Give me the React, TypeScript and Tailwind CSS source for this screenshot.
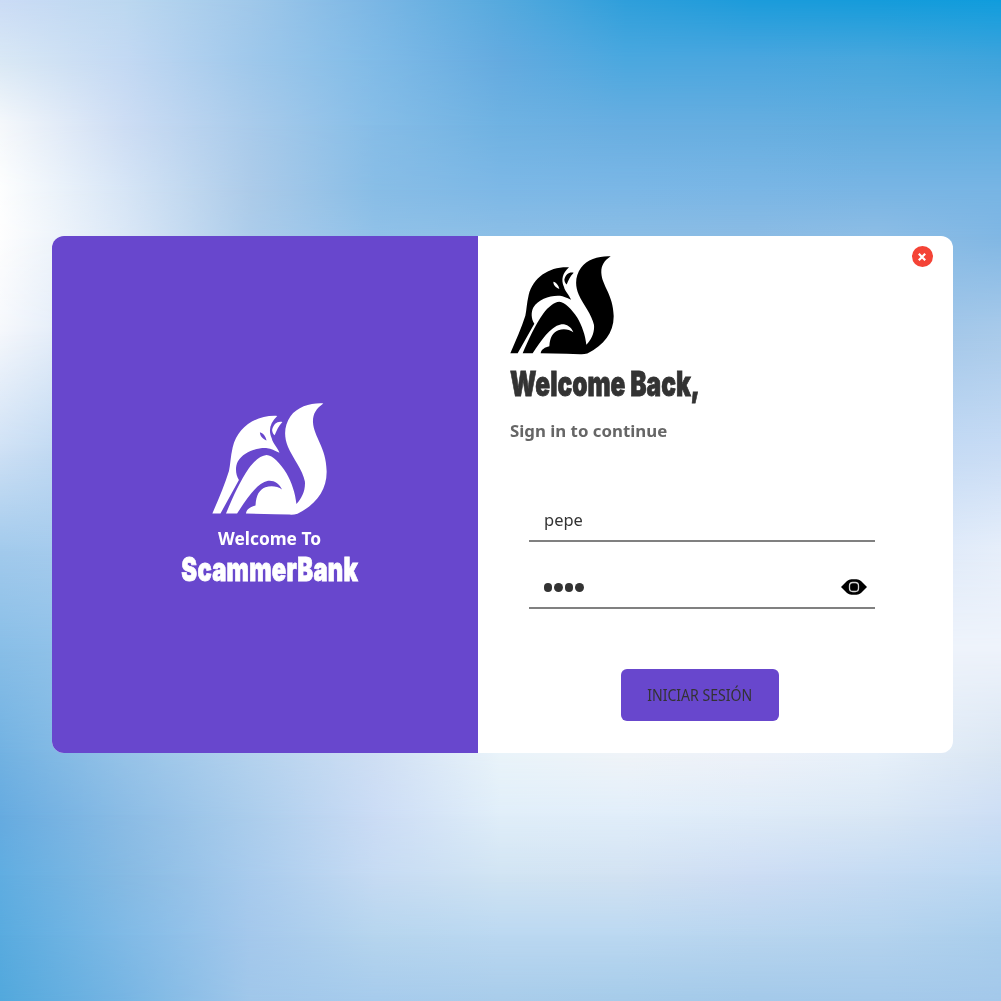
import React from "react";

type LogoProps = { className: string };

// Each row is a horizontal colour ramp; rows fade into one another down the page.
const rows: { y: number; colors: string }[] = [
  { y: 0, colors: "#cbdcf6,#bcd8f0,#a0c8ea,#7bb7e5,#56aade,#2f9fdb,#1c9cdb,#159cdb,#109ddd" },
  { y: 60, colors: "#d9e8f5,#c3d9f3,#9fc8eb,#80bbe7,#64abe0,#4ba8df,#4ba6df,#49a7dd,#3fa4dc" },
  { y: 125, colors: "#f5f8fb,#cdddf4,#a9cbeb,#86bde7,#6fb2e2,#68aee1,#66aee0,#62addf,#60ade0" },
  { y: 190, colors: "#fdfefe,#d6e5f6,#accbe9,#88bde6,#7db8e6,#7bb7e6,#7ab6e5,#79b5e4,#78b5e4" },
  { y: 235, colors: "#fefefe,#dae7f6,#acccea,#90c1e8,#8bbee6,#8abde5,#8abbe4,#8cbde5,#80b7e4" },
  { y: 330, colors: "#f6f8fc,#cfe0f5,#a0c9ea,#84bbe5,#84b9e4,#86b9e4,#8bbae5,#9cc3e8,#a8caea" },
  { y: 450, colors: "#cfe1f5,#b0d0ef,#a0c9ea,#94c3e8,#94c3e8,#a8ccee,#b4d0ee,#c0d8f3,#c8dcf5" },
  { y: 550, colors: "#a2caec,#a8ccee,#a8ccee,#a8ccee,#b4d3ef,#c8dcf5,#d0e2f6,#d8e6f8,#e6eefa" },
  { y: 650, colors: "#88bee7,#98c5ea,#a8ccee,#c0d8f3,#d8e8f6,#e0ecf8,#e8f0fa,#eef3fb,#eef3fb" },
  { y: 752, colors: "#72b2e2,#96c3e8,#b4d2ee,#cfdff4,#eaf4fa,#f0f4f8,#eef2f9,#e8f1fa,#dae6f3" },
  { y: 815, colors: "#66abe0,#8bbce5,#abcdec,#cbdcf5,#e0eef9,#e1eefa,#deebf8,#d9e7f5,#cddef5" },
  { y: 875, colors: "#60ade1,#86bae3,#a8cbed,#c6dbf3,#d1e4f3,#d2e2f2,#cdddf4,#c5dbf3,#bcd8f2" },
  { y: 935, colors: "#59abdf,#80bae6,#a4c8ec,#b6d5ee,#bbd8f1,#bbd8f1,#b8d5ef,#b4d3ee,#aaceec" },
  { y: 1001, colors: "#52a8dc,#77b5e3,#a0c7ea,#a6cbec,#a8ccea,#a5cbe9,#a3c9e9,#a4c9ea,#a3c8ea" },
];

function Backdrop() {
  return (
    <div className="absolute inset-0 overflow-hidden">
      {rows.map((row, i) => {
        const mask =
          i === 0
            ? undefined
            : `linear-gradient(to bottom, transparent ${rows[i - 1].y}px, black ${row.y}px)`;
        return (
          <div
            key={row.y}
            className="absolute inset-0"
            style={{
              backgroundImage: `linear-gradient(to right, ${row.colors})`,
              maskImage: mask,
              WebkitMaskImage: mask,
            }}
          />
        );
      })}
    </div>
  );
}

function FoxLogo({ className }: LogoProps) {
  return (
    <svg viewBox="30 33 312 295" preserveAspectRatio="none" fill="currentColor" className={className}>
      <path d="M332 34C312 48 303 62 304 84C306 122 340 150 341 212C342 262 312 300 262 325Q250 328 240 327L200 326L122 324C124 312 135 306 148 303C150 275 158 262 175 255C192 250 208 253 220 261C212 243 197 236 182 238C150 245 125 285 98 324L68 324C85 285 105 240 130 205C145 185 163 171 178 170C195 171 215 192 232 218C246 242 256 270 259 299C274 284 284 262 282 240C276 208 250 180 236 148C224 120 226 92 243 68C262 42 300 32 332 34Z" />
      <path
        fillRule="evenodd"
        d="M207 67C150 64 100 95 86 150C80 175 80 195 76 212C64 250 48 285 31 324L53 324L103 236C93 220 93 200 100 187C115 162 150 150 180 152C190 153 200 158 213 164C208 150 195 140 192 126C182 104 188 84 207 67ZM160 110C168 112 176 120 178 132C170 128 160 122 160 110Z"
      />
      <path d="M221 83C208 80 197 87 193 104C194 112 197 116 200 118C205 106 210 94 221 83Z" />
    </svg>
  );
}

function EyeIcon() {
  return (
    <svg viewBox="0 0 26 16" className="h-4 w-[26px]">
      <path d="M0 8L6 2Q8 .3 10.500 .3H15.500Q18 .3 20 2L26 8L20 14Q18 15.700 15.500 15.700H10.500Q8 15.700 6 14Z" fill="#000" />
      <rect x="8.500" y="3.500" width="9" height="9" rx="3.200" fill="none" stroke="#d4d4d4" strokeWidth="1.300" />
    </svg>
  );
}

export default function App() {
  return (
    <div className="relative h-[1001px] w-[1001px] overflow-hidden pt-[236px] pl-[52px] font-['Noto_Sans',sans-serif]">
      <Backdrop />
      <main className="relative flex h-[516.500px] w-[900.500px] overflow-hidden rounded-xl bg-white">
        <section className="flex w-[425.500px] shrink-0 flex-col items-center bg-[#6847cd] pt-[167px] pl-[9px] text-white">
          <FoxLogo className="h-[112px] w-[115px]" />
          <p className="mt-3 scale-x-[1.02] text-[17px] leading-6 font-bold whitespace-nowrap">Welcome To</p>
          <h1 className="scale-x-[0.72] pt-px font-['Inter',sans-serif] text-[33px] leading-[34px] font-black tracking-[0.300px] whitespace-nowrap [-webkit-text-stroke:0.800px_white]">ScammerBank</h1>
        </section>
        <section className="flex flex-1 flex-col pr-[78px] pl-[33px]">
          <div className="flex h-[119px] items-start justify-between pt-5">
            <FoxLogo className="-ml-px h-[98.500px] w-[104px] text-black" />
            <button aria-label="Cerrar" className="-mt-2.5 -mr-[58px] flex size-[21px] items-center justify-center rounded-full bg-[#f44336]">
              <svg viewBox="0 0 8 8" className="size-2" stroke="#fff" strokeWidth="2.2">
                <path d="M.8 .8L7.2 7.2M7.2 .8L.8 7.2" />
              </svg>
            </button>
          </div>
          <h2 className="mt-2.5 -ml-px origin-left scale-x-[0.72] font-['Inter',sans-serif] text-[34px] leading-[38px] font-black whitespace-nowrap text-[#333] [-webkit-text-stroke:0.800px_#333]">Welcome Back,</h2>
          <p className="mt-4 -ml-px origin-left scale-x-[1.02] text-[16.500px] leading-6 font-bold whitespace-nowrap text-[#666]">Sign in to continue</p>
          <div className="mt-14 ml-[18px] flex h-[43px] items-center border-b-2 border-[#808080] pl-[15px] text-[16px] text-[#333]">
            <span className="origin-left scale-x-[1.030]">pepe</span>
          </div>
          <div className="ml-[18px] flex h-[67px] items-end justify-between border-b-2 border-[#808080] pr-2 pb-3 pl-[15px]">
            <span className="flex gap-[2px] pb-[3px]">
              {[0, 1, 2, 3].map((n) => (
                <span key={n} className="h-[9px] w-[8.500px] rounded-full bg-[#333]" />
              ))}
            </span>
            <EyeIcon />
          </div>
          <button className="mt-[60px] ml-[110px] flex h-[52px] w-[158px] shrink-0 items-center justify-center rounded-md bg-[#6847cd] text-[16px] text-[#333]">
            <span className="scale-x-[0.88] whitespace-nowrap">INICIAR SESIÓN</span>
          </button>
        </section>
      </main>
    </div>
  );
}
